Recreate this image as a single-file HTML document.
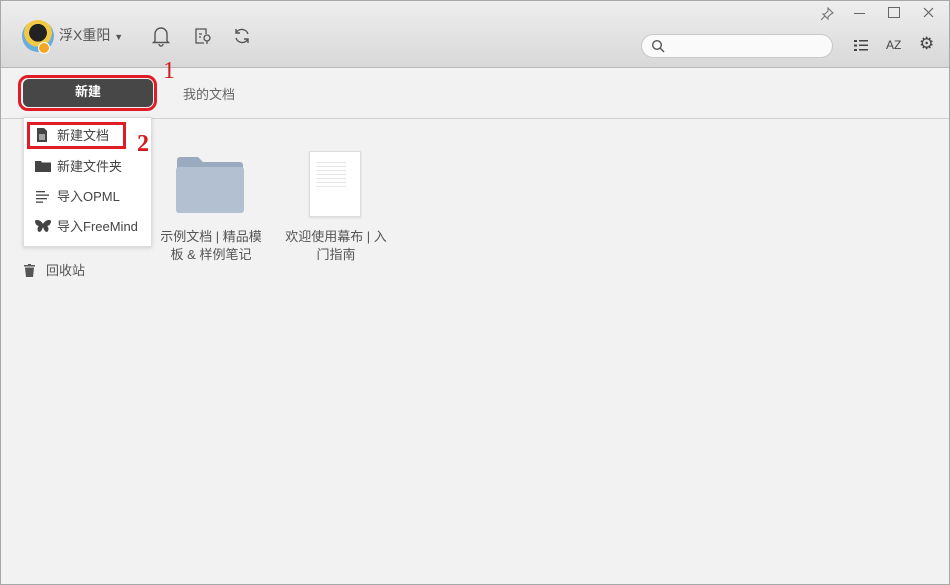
<!DOCTYPE html>
<html><head><meta charset="utf-8"><style>
*{margin:0;padding:0;box-sizing:border-box}
body{width:950px;height:585px;background:#f2f2f2;font-family:"Liberation Sans","Noto Sans CJK SC",sans-serif;position:relative;overflow:hidden;border:1px solid #a8a8a8}
.hdr{position:absolute;left:0;top:0;width:948px;height:67px;background:linear-gradient(#efeeef,#d9d8d9);border-bottom:1px solid #b8b8b8}
.abs{position:absolute}
.t{font-size:13px;color:#444}
</style></head><body>
<div class="hdr"></div>
<div class="abs" style="left:21px;top:19px;width:32px;height:32px;border-radius:50%;background:radial-gradient(circle at 50% 40%,#222 0 35%,#f3c843 36% 55%,#6aaedc 56%)"></div>
<div class="abs" style="left:37px;top:41px;width:12px;height:12px;border-radius:50%;background:#f5a623;border:1px solid #fff"></div>
<div class="abs t" style="left:58px;top:24px;font-size:14px;color:#555">浮X重阳 <span style="font-size:9px">▼</span></div>
<svg class="abs" style="left:150px;top:24px" width="20" height="22" viewBox="0 0 20 22" fill="none" stroke="#555" stroke-width="1.4"><path d="M4 16V9a6 6 0 0 1 12 0v7l1.5 1.5h-15z"/><path d="M8 19a2 2 0 0 0 4 0"/></svg>
<svg class="abs" style="left:192px;top:25px" width="20" height="20" viewBox="0 0 20 20" fill="none" stroke="#555" stroke-width="1.3"><path d="M11 17H3V3h10v5"/><path d="M6 8h3M6 11h2"/><circle cx="14" cy="12" r="3"/><path d="M14 15v3"/></svg>
<svg class="abs" style="left:231px;top:25px" width="20" height="20" viewBox="0 0 20 20" fill="none" stroke="#555" stroke-width="1.4"><path d="M16 8a6.5 6.5 0 0 0-12-1M4 12a6.5 6.5 0 0 0 12 1"/><path d="M4 3v4h4M16 17v-4h-4"/></svg>
<svg class="abs" style="left:819px;top:6px" width="14" height="14" viewBox="0 0 14 14" fill="none" stroke="#777" stroke-width="1.1"><path d="M8 1l5 5-2 1-3 3 0 2-5-5 2 0 3-3z"/><path d="M5 9l-4 4"/></svg>
<div class="abs" style="left:853px;top:12px;width:11px;height:1px;background:#666"></div>
<div class="abs" style="left:887px;top:6px;width:12px;height:11px;border:1px solid #666"></div>
<svg class="abs" style="left:922px;top:6px" width="11" height="11" viewBox="0 0 11 11" stroke="#666" stroke-width="1.2"><path d="M1 1l9 9M10 1l-9 9"/></svg>
<div class="abs" style="left:640px;top:33px;width:192px;height:24px;border-radius:12px;background:#fafafa;border:1px solid #c8c8c8"></div>
<svg class="abs" style="left:650px;top:38px" width="14" height="14" viewBox="0 0 14 14" fill="none" stroke="#555" stroke-width="1.4"><circle cx="6" cy="6" r="4.3"/><path d="M9 9l4 4"/></svg>
<svg class="abs" style="left:853px;top:38px" width="14" height="13" viewBox="0 0 14 13" fill="#444"><rect x="0" y="1" width="3" height="2"/><rect x="5" y="1" width="9" height="1.5"/><rect x="0" y="5.5" width="3" height="2"/><rect x="5" y="5.5" width="9" height="1.5"/><rect x="0" y="10" width="3" height="2"/><rect x="5" y="10" width="9" height="1.5"/></svg>
<div class="abs" style="left:885px;top:37px;font-size:12px;color:#444">AZ</div>
<div class="abs" style="left:918px;top:33px;font-size:17px;color:#444">⚙</div>
<div class="abs" style="left:0;top:117px;width:948px;height:1px;background:#d0d0d0"></div>
<div class="abs" style="left:17px;top:74px;width:139px;height:36px;border:3px solid #e01d25;border-radius:10px"></div>
<div class="abs" style="left:22px;top:78px;width:130px;height:28px;background:#474747;border-radius:6px;color:#fff;font-size:13px;font-weight:bold;text-align:center;line-height:26px">新建</div>
<div class="abs" style="left:162px;top:57px;font-family:'Liberation Serif',serif;color:#d51a1a;font-size:24px">1</div>
<div class="abs t" style="left:182px;top:83px;color:#666">我的文档</div>
<div class="abs" style="left:22px;top:116px;width:129px;height:130px;background:#fff;border:1px solid #ddd;box-shadow:0 1px 4px rgba(0,0,0,.15)"></div>
<div class="abs" style="left:26px;top:121px;width:99px;height:27px;border:3px solid #e01d25"></div>
<div class="abs" style="left:136px;top:130px;font-family:'Liberation Serif',serif;color:#d51a1a;font-size:24px;font-weight:bold">2</div>
<svg class="abs" style="left:35px;top:127px" width="12" height="14" viewBox="0 0 12 14"><path d="M1 0h7l3 3v11H1z" fill="#444"/><path d="M3 7h6M3 9h6M3 11h6" stroke="#fff"/></svg>
<div class="abs t" style="left:56px;top:124px">新建文档</div>
<svg class="abs" style="left:34px;top:159px" width="16" height="12" viewBox="0 0 16 12"><path d="M0 1h6l1 1.5h9V12H0z" fill="#444"/></svg>
<div class="abs t" style="left:56px;top:155px">新建文件夹</div>
<svg class="abs" style="left:35px;top:189px" width="13" height="13" viewBox="0 0 13 13" fill="#444"><rect y="1" width="9" height="1.3"/><rect y="4.5" width="13" height="1.3"/><rect y="8" width="11" height="1.3"/><rect y="11.5" width="7" height="1.3"/></svg>
<div class="abs t" style="left:56px;top:185px">导入OPML</div>
<svg class="abs" style="left:34px;top:219px" width="16" height="13" viewBox="0 0 16 13" fill="#444"><path d="M8 4C6 0 1-1 0 1c0 3 2 5 4 5-2 1-2 5 0 6 2 0 3-2 4-5 1 3 2 5 4 5 2-1 2-5 0-6 2 0 4-2 4-5-1-2-6-1-8 3z"/></svg>
<div class="abs t" style="left:56px;top:215px">导入FreeMind</div>
<svg class="abs" style="left:23px;top:263px" width="11" height="13" viewBox="0 0 11 13" fill="#555"><rect x="0" y="1" width="11" height="1.5"/><rect x="4" y="0" width="3" height="1"/><path d="M1 3.5h9l-1 9.5H2z"/></svg>
<div class="abs t" style="left:45px;top:259px;color:#555">回收站</div>
<svg class="abs" style="left:174px;top:155px" width="70" height="57" viewBox="0 0 70 57"><path d="M2 4a3 3 0 0 1 3-3h18l5 5h37a3 3 0 0 1 3 3v45a3 3 0 0 1-3 3H5a3 3 0 0 1-3-3z" fill="#9aaabf"/><path d="M1 14a3 3 0 0 1 3-3h62a3 3 0 0 1 3 3v40a3 3 0 0 1-3 3H4a3 3 0 0 1-3-3z" fill="#b3c0d2"/></svg>
<div class="abs t" style="left:155px;top:227px;width:110px;text-align:center;line-height:18px;color:#555">示例文档 | 精品模板 &amp; 样例笔记</div>
<div class="abs" style="left:308px;top:150px;width:52px;height:66px;background:#fff;border:1px solid #ddd;box-shadow:0 1px 2px rgba(0,0,0,.1)"></div>
<div class="abs" style="left:315px;top:158px;width:30px;height:28px;background:repeating-linear-gradient(#fff 0 3px,#e8e8e8 3px 4px)"></div>
<div class="abs t" style="left:280px;top:227px;width:110px;text-align:center;line-height:18px;color:#555">欢迎使用幕布 | 入门指南</div>
</body></html>
